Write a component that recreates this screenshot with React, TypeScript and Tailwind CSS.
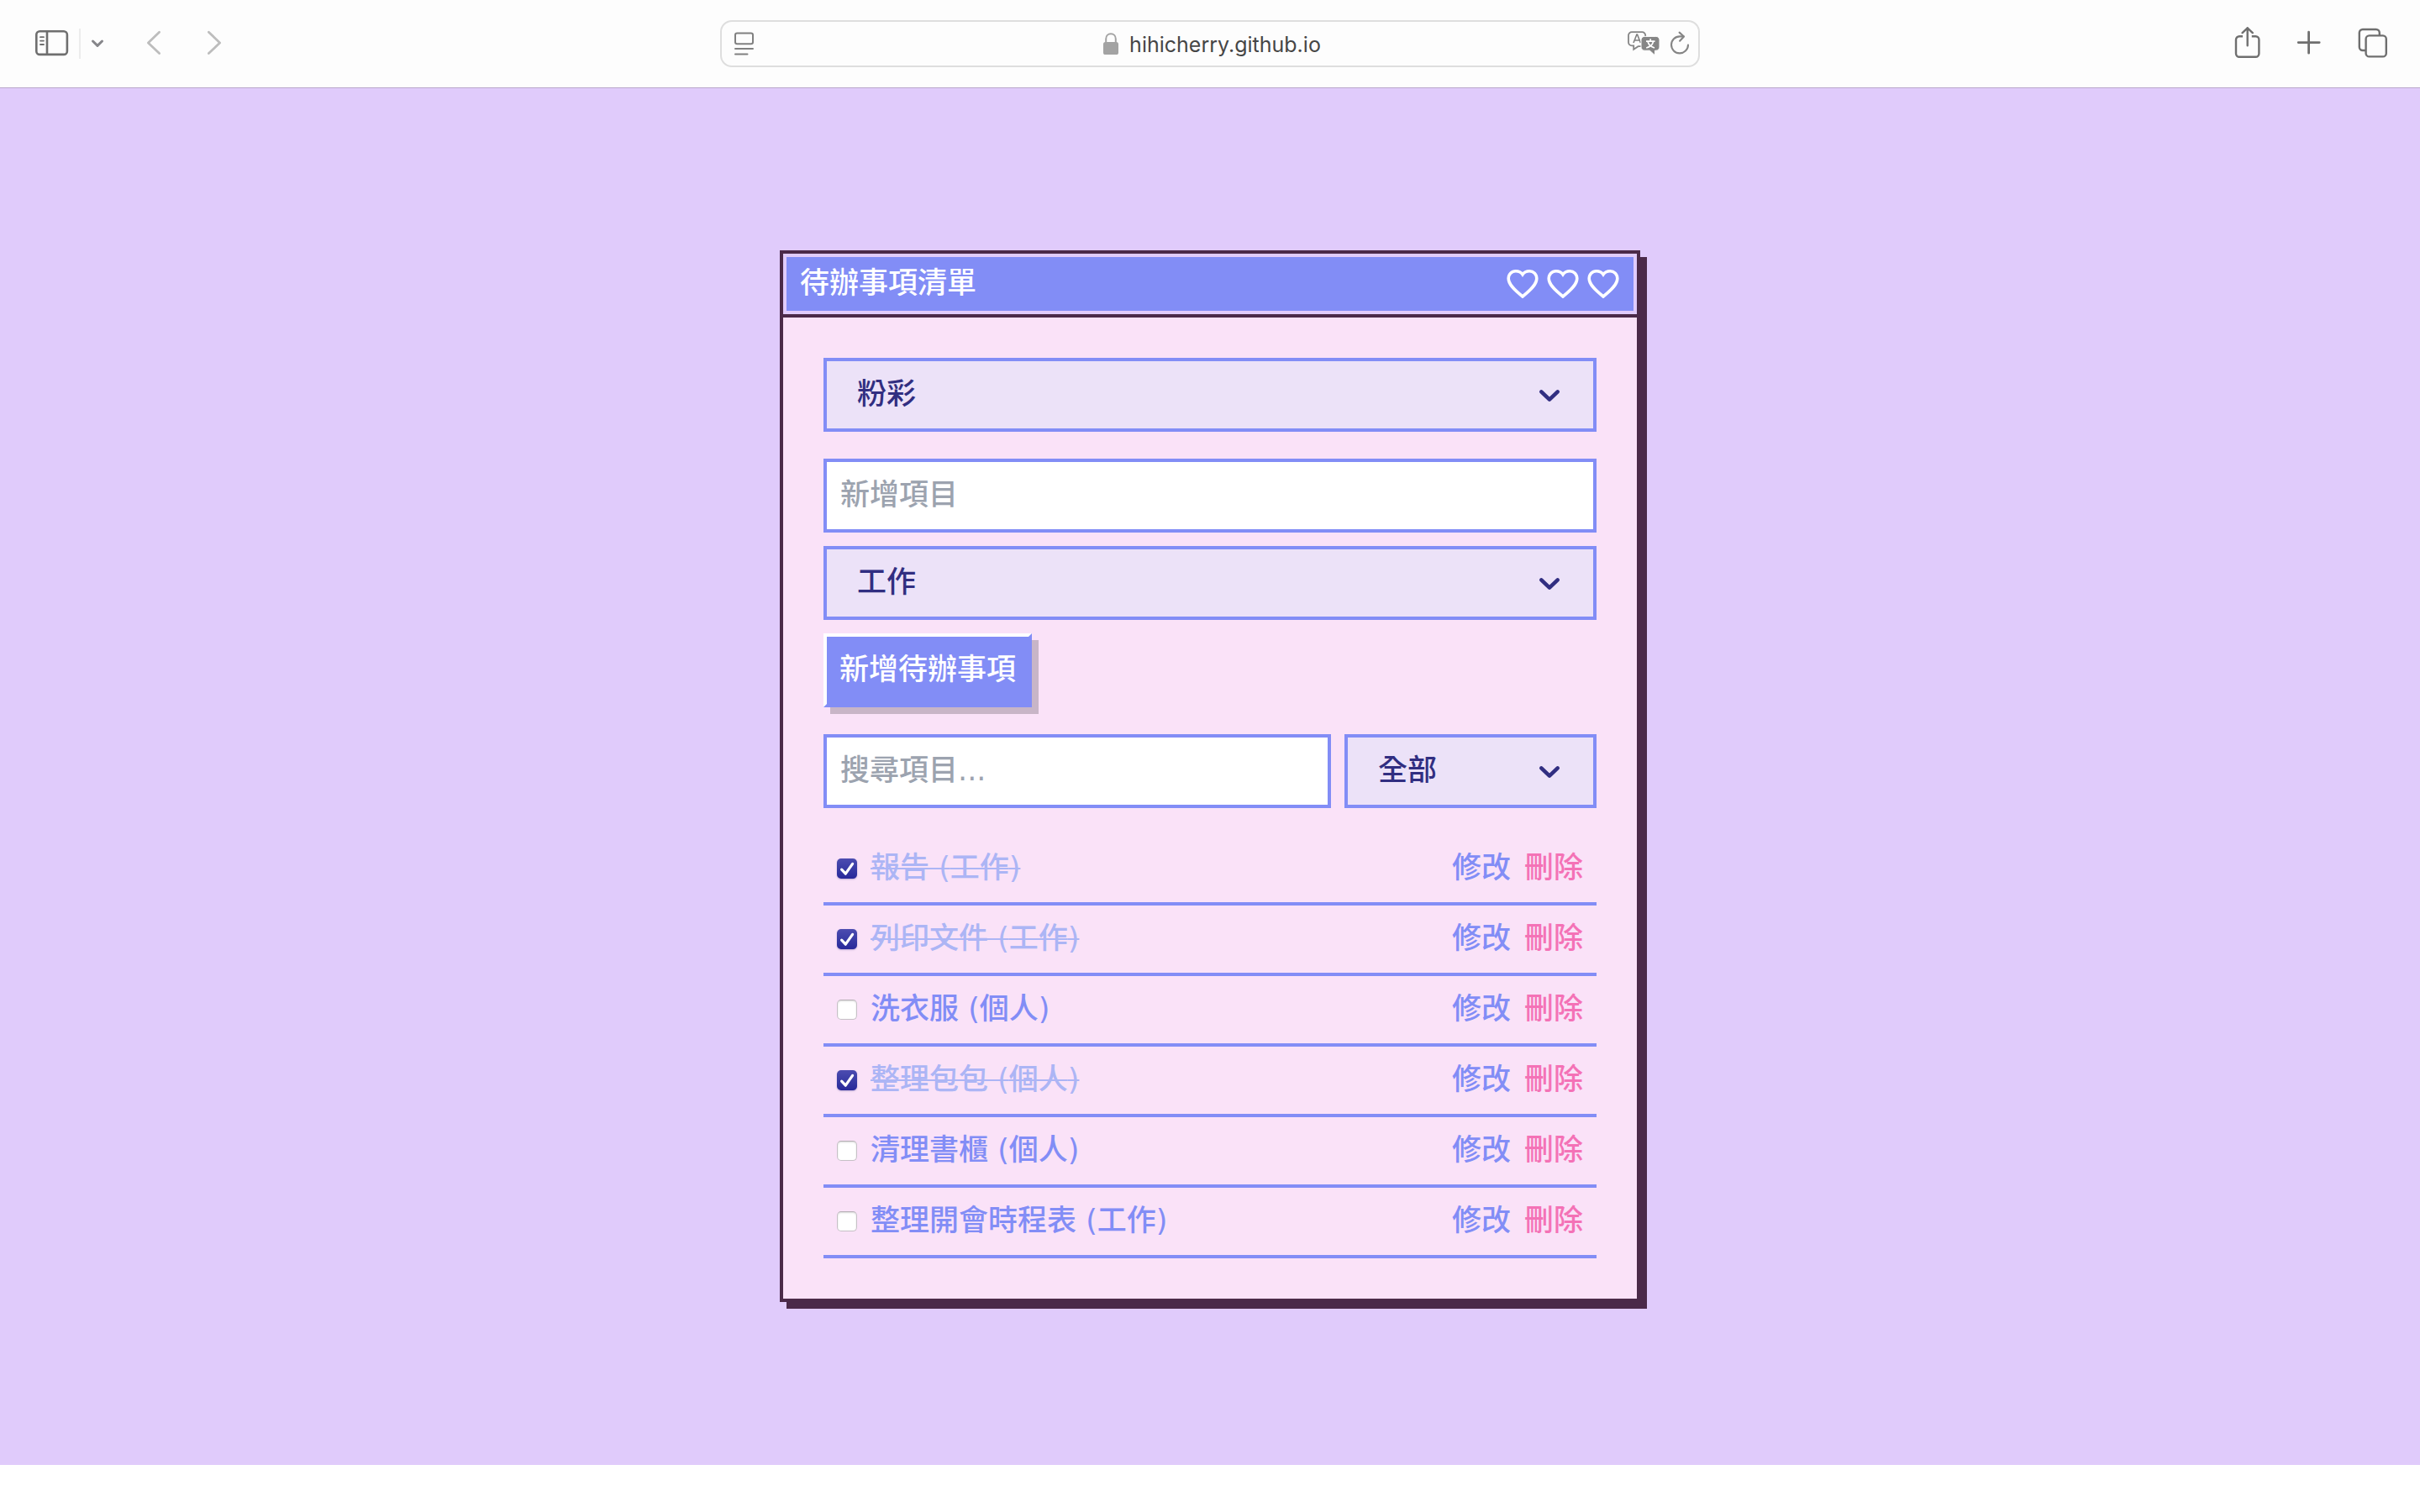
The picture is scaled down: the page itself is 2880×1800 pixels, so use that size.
import { useState } from 'react';
import type { ReactNode } from 'react';

type Todo = { id: number; text: string; category: string; done: boolean };

const initialTodos: Todo[] = [
  { id: 1, text: '報告', category: '工作', done: true },
  { id: 2, text: '列印文件', category: '工作', done: true },
  { id: 3, text: '洗衣服', category: '個人', done: false },
  { id: 4, text: '整理包包', category: '個人', done: true },
  { id: 5, text: '清理書櫃', category: '個人', done: false },
  { id: 6, text: '整理開會時程表', category: '工作', done: false },
];

function IconButton({ label, className, children }: { label: string; className?: string; children: ReactNode }) {
  return (
    <button type="button" aria-label={label} className={className}>
      {children}
    </button>
  );
}

function BrowserBar() {
  return (
    <header className="relative grid h-[104px] shrink-0 grid-cols-[1fr_minmax(0,1166px)_1fr] items-center bg-[#fdfdfd] text-[#6f6f6f] shadow-[0_1px_0_#b9a7cb]">
      <div className="flex items-center pl-[42px]">
        <IconButton label="側邊欄">
          <svg width="40" height="32" viewBox="0 0 40 32" fill="none" stroke="currentColor" strokeWidth="2.6" strokeLinecap="round">
            <rect x="1.3" y="1.3" width="36.6" height="27.6" rx="4" />
            <path d="M14 1.6v27" />
            <path d="M6 8.2h4M6 12.6h4M6 17h4" strokeWidth="1.8" />
          </svg>
        </IconButton>
        <span className="ml-3 h-9 w-0.5 bg-[#ececec]" />
        <IconButton label="標籤頁群組" className="ml-3">
          <svg width="16" height="16" viewBox="0 0 16 16" fill="none" stroke="#86868a" strokeWidth="3" strokeLinecap="round" strokeLinejoin="round">
            <path d="M2.5 5 8 10.4 13.5 5" />
          </svg>
        </IconButton>
        <IconButton label="上一頁" className="ml-12">
          <svg width="20" height="32" viewBox="0 0 20 32" fill="none" stroke="#bdbdbd" strokeWidth="2.8" strokeLinecap="round" strokeLinejoin="round">
            <path d="M17.6 2.2 4.400 15l13.200 12.600" />
          </svg>
        </IconButton>
        <IconButton label="下一頁" className="ml-[52px]">
          <svg width="20" height="32" viewBox="0 0 20 32" fill="none" stroke="#bdbdbd" strokeWidth="2.8" strokeLinecap="round" strokeLinejoin="round">
            <path d="M4.400 2.200 17.600 15 4.400 27.600" />
          </svg>
        </IconButton>
      </div>

      <div className="grid h-14 grid-cols-[1fr_auto_1fr] items-center rounded-[14px] border-2 border-[#dedede] pl-[14px] pr-2.5">
        <div className="flex">
          <IconButton label="網頁選單">
            <svg width="26" height="28" viewBox="0 0 26 28" fill="none" stroke="#808080" strokeWidth="2" strokeLinecap="round">
              <rect x="2" y="1.6" width="21" height="12.6" rx="2.2" />
              <path d="M2 20h21M2 26.4h14.5" />
            </svg>
          </IconButton>
        </div>
        <label className="flex items-center gap-3">
          <svg width="20" height="28" viewBox="0 0 20 28" fill="none">
            <path d="M4.2 13V8.2C4.2 4.6 6.6 2.2 10 2.2s5.8 2.4 5.8 6V13" stroke="#a3a3a3" strokeWidth="2" />
            <rect x="1" y="12" width="18" height="15" rx="2.6" fill="#a3a3a3" />
          </svg>
          <input
            aria-label="網址"
            defaultValue="hihicherry.github.io"
            className="field-sizing-content bg-transparent pt-0.5 font-[Inter,sans-serif] text-[25px] leading-8 text-[#464646] outline-none"
          />
        </label>
        <div className="flex items-center justify-end gap-3">
          <IconButton label="翻譯">
            <svg width="38" height="30" viewBox="0 0 38 30" fill="none">
              <path
                d="M5 1.2h12.2a4 4 0 0 1 4 4v10a3 3 0 0 1-3 3h-5.6L7.2 21.8v-4.5H5a4 4 0 0 1-4-4V5.2a4 4 0 0 1 4-4Z"
                stroke="#858585"
                strokeWidth="1.8"
              />
              <path d="M7 14l3.9-10h.6L15.4 14M8.2 11h6" stroke="#808080" strokeWidth="1.6" />
              <path
                d="M20.2 6.4h13.6a4.2 4.2 0 0 1 4.2 4.2v8.4a4.2 4.2 0 0 1-4.2 4.2h-1.3v5.6l-6.200-5.600h-6.100a4.200 4.200 0 0 1-4.200-4.200v-8.400a4.200 4.200 0 0 1 4.200-4.200Z"
                fill="#858585"
                stroke="#fdfdfd"
                strokeWidth="1"
              />
              <path
                d="M22 12.2h10.5M27.2 9.2v3M24 12.6c1 3.6 4 6.4 8 7.4M30.6 12.6c-1 3.6-4 6.4-8.4 7.4"
                stroke="#fff"
                strokeWidth="1.7"
              />
            </svg>
          </IconButton>
          <IconButton label="重新載入">
            <svg width="24" height="30" viewBox="0 0 24 30" fill="none" stroke="#858585" strokeWidth="2.1" strokeLinecap="round" strokeLinejoin="round">
              <path d="M22 16.6a10 10 0 1 1-10-10.2h4.5" />
              <path d="M11.6 1.6l5.4 4.9-4.9 5.2" />
            </svg>
          </IconButton>
        </div>
      </div>

      <div className="flex items-center justify-end gap-10 pr-9">
        <IconButton label="分享">
          <svg width="36" height="40" viewBox="0 0 36 40" fill="none" stroke="currentColor" strokeWidth="2.4" strokeLinecap="round" strokeLinejoin="round">
            <path
              d="M13 11.200H9a4 4 0 0 0-4 4v16.600a4 4 0 0 0 4 4h19.400a4 4 0 0 0 4-4V15.200a4 4 0 0 0-4-4h-4.600"
              strokeLinecap="butt"
            />
            <path d="M18.7 22.200V1.300M12.600 7.100l6.100-5.800 6.100 5.800" />
          </svg>
        </IconButton>
        <IconButton label="新標籤頁">
          <svg width="32" height="32" viewBox="0 0 32 32" fill="none" stroke="currentColor" strokeWidth="2.8" strokeLinecap="round">
            <path d="M15.6 2.200v25M3.200 14.600h25" />
          </svg>
        </IconButton>
        <IconButton label="標籤頁概覽">
          <svg width="40" height="40" viewBox="0 0 40 40" fill="none" stroke="currentColor" strokeWidth="2.4">
            <path d="M11 28H7.800a4 4 0 0 1-4-4V7a4 4 0 0 1 4-4h16a4 4 0 0 1 4 4v3" />
            <rect x="11.6" y="10.4" width="24.2" height="25" rx="4" />
          </svg>
        </IconButton>
      </div>
    </header>
  );
}

function Heart() {
  return (
    <svg width="40" height="40" viewBox="0 0 40 40" fill="none" stroke="#fff" strokeWidth="3.6">
      <path d="M20 35C9 26.2 3.2 20.1 3.2 13.6 3.2 8.4 7 4.7 11.8 4.7c3.4 0 6.3 1.2 8.2 4 1.9-2.800 4.800-4 8.200-4 4.800 0 8.600 3.700 8.600 8.900 0 6.500-5.800 12.600-16.800 21.400Z" />
    </svg>
  );
}

function Dropdown({ label, options }: { label: string; options: string[] }) {
  return (
    <div className="relative">
      <select
        aria-label={label}
        className="block h-[88px] w-full appearance-none border-4 border-[#828df6] bg-[#ece2f8] pl-9 pr-20 pb-0.5 text-[35px] leading-[48px] text-[#312e81] outline-none"
      >
        {options.map((o) => (
          <option key={o}>{o}</option>
        ))}
      </select>
      <svg
        className="pointer-events-none absolute right-10 top-7 text-[#312e81]"
        width="32"
        height="32"
        viewBox="0 0 32 32"
        fill="none"
        stroke="currentColor"
        strokeWidth="4.6"
        strokeLinecap="round"
        strokeLinejoin="round"
      >
        <path d="M6.3 12.400l9.700 9.200 9.700-9.200" />
      </svg>
    </div>
  );
}

const fieldClass =
  'block h-[88px] w-full border-4 border-[#828df6] bg-white px-4 pb-0.5 text-[35px] leading-[48px] text-[#312e81] outline-none placeholder:text-[#9ca3af]';

function TodoRow({ todo, onToggle, onDelete }: { todo: Todo; onToggle: () => void; onDelete: () => void }) {
  return (
    <li className="flex h-[84px] items-center justify-between border-b-4 border-[#828df6] px-4">
      <label className="flex items-center gap-4">
        <span className="relative size-6">
          <input
            type="checkbox"
            checked={todo.done}
            onChange={onToggle}
            className="peer block size-6 appearance-none rounded-[5px] border border-[#c6c0c6] border-t-[#b5afb5] bg-white shadow-[inset_0_1px_2px_rgba(0,0,0,0.15)] checked:border-0 checked:bg-linear-to-b checked:from-[#4c4cb0] checked:to-[#28289a] checked:shadow-[0_1px_2px_rgba(49,46,129,0.3)]"
          />
          <svg
            className="pointer-events-none absolute inset-0 hidden peer-checked:block"
            width="24"
            height="24"
            viewBox="0 0 24 24"
            fill="none"
            stroke="#fff"
            strokeWidth="3.2"
            strokeLinecap="round"
            strokeLinejoin="round"
          >
            <path d="M5.6 13.2l4.7 5L18.6 6.4" />
          </svg>
        </span>
        <span
          className={
            todo.done
              ? 'pb-0.5 leading-[48px] text-[#acb5f5] line-through decoration-2'
              : 'pb-0.5 leading-[48px] text-[#828df6]'
          }
        >
          {todo.text} ({todo.category})
        </span>
      </label>
      <div className="flex gap-4 pb-0.5 leading-[48px]">
        <button type="button" className="text-[#828df6]">
          修改
        </button>
        <button type="button" onClick={onDelete} className="text-[#f472b6]">
          刪除
        </button>
      </div>
    </li>
  );
}

export default function App() {
  const [todos, setTodos] = useState(initialTodos);

  return (
    <div className="flex min-h-screen flex-col bg-white">
      <BrowserBar />
      <main className="mb-14 flex flex-1 items-center justify-center bg-[#e0cbfb] font-['DejaVu_Sans','Noto_Sans_CJK_TC',sans-serif] text-[35px] font-medium">
        <section className="w-full max-w-5xl border-4 border-[#4b2a49] bg-[#fae2f8] shadow-[8px_8px_0_#4b2a49]">
          <div className="border-b-4 border-[#4b2a49]">
            <div className="flex h-[72px] items-center justify-between border-4 border-[#e0cbfb] bg-[#828df6] px-4 text-white">
              <h1 className="pb-0.5 font-medium leading-[48px]">待辦事項清單</h1>
              <div className="flex gap-2">
                <Heart />
                <Heart />
                <Heart />
              </div>
            </div>
          </div>

          <div className="p-12">
            <Dropdown label="主題" options={['粉彩']} />

            <form className="mt-8 flex flex-col gap-4" onSubmit={(e) => e.preventDefault()}>
              <input aria-label="新增項目" placeholder="新增項目" className={fieldClass} />
              <Dropdown label="類別" options={['工作', '個人']} />
              <button
                type="submit"
                className="h-[88px] self-start border-4 border-b-[#828df6] border-l-white border-r-[#828df6] border-t-white bg-[#828df6] px-[15px] pb-0.5 leading-[48px] text-white shadow-[8px_8px_0_#c8b5c7]"
              >
                新增待辦事項
              </button>
            </form>

            <div className="mt-8 flex gap-4">
              <div className="flex-1">
                <input aria-label="搜尋項目" placeholder="搜尋項目..." className={fieldClass} />
              </div>
              <div className="w-[300px]">
                <Dropdown label="篩選類別" options={['全部', '工作', '個人']} />
              </div>
            </div>

            <ul className="mt-8">
              {todos.map((todo) => (
                <TodoRow
                  key={todo.id}
                  todo={todo}
                  onToggle={() => setTodos(todos.map((t) => (t.id === todo.id ? { ...t, done: !t.done } : t)))}
                  onDelete={() => setTodos(todos.filter((t) => t.id !== todo.id))}
                />
              ))}
            </ul>
          </div>
        </section>
      </main>
    </div>
  );
}
